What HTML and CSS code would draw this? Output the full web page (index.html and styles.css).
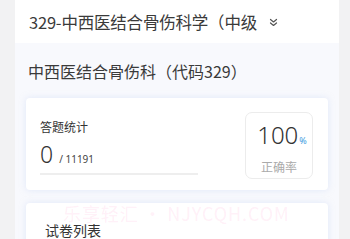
FILE: index.html
```html
<!DOCTYPE html>
<html lang="zh">
<head>
<meta charset="utf-8">
<link rel="stylesheet" href="styles.css">
</head>
<body>
<div class="page">
  <div class="panel">
    <div class="header">
      <span class="header-title">329-中西医结合骨伤科学（中级</span>
      <svg class="chev" width="9" height="9" viewBox="0 0 9 9"><path d="M1.5 1.5 L4.5 4 L7.5 1.5 M1.5 5 L4.5 7.5 L7.5 5" fill="none" stroke="#555" stroke-width="1.2" stroke-linecap="round" stroke-linejoin="round"/></svg>
    </div>
    <div class="body">
      <div class="subject">中西医结合骨伤科（代码329）</div>
      <div class="card stats">
        <div class="stats-left">
          <div class="label">答题统计</div>
          <div class="count"><span class="num">0</span><span class="total">/ 11191</span></div>
          <div class="bar"></div>
        </div>
        <div class="rate">
          <div class="rate-num">100<span class="pct">%</span></div>
          <div class="rate-label">正确率</div>
        </div>
      </div>
      <div class="card list">
        <div class="watermark">乐享轻汇 • NJYCQH.COM</div>
        <div class="list-title">试卷列表</div>
      </div>
    </div>
  </div>
</div>
</body>
</html>
```
FILE: styles.css
```css
html, body {
  margin: 0;
  padding: 0;
  background: #f2f2f3;
  font-family: "Noto Sans CJK SC", "Noto Sans", sans-serif;
  overflow: hidden;
}
.page {
  width: 350px;
  height: 239px;
  padding-left: 15px;
  box-sizing: border-box;
}
.panel {
  width: 324px;
  height: 239px;
  background: #f8f9fd;
  overflow: hidden;
}
.header {
  height: 43px;
  background: #fff;
  display: flex;
  align-items: center;
  padding-left: 14px;
  box-sizing: border-box;
}
.header-title {
  font-size: 16.5px;
  color: #3a3a3a;
  line-height: 20px;
  letter-spacing: -0.2px;
}
.chev {
  margin-left: 12px;
  margin-top: 1px;
}
.body {
  padding: 0 11px 0 11px;
}
.subject {
  font-size: 16px;
  color: #3a3a3a;
  line-height: 20px;
  padding: 18px 0 0 2px;
  height: 37px;
  box-sizing: border-box;
}
.card {
  background: #fff;
  border-radius: 4px;
  box-shadow: 0 0 6px rgba(200, 215, 245, 0.5);
}
.stats {
  margin-top: 18px;
  height: 92px;
  display: flex;
  justify-content: space-between;
  padding: 14px 15px 0 14px;
  box-sizing: border-box;
}
.stats-left {
  width: 158px;
  padding-top: 7px;
}
.label {
  font-size: 12px;
  color: #333;
  line-height: 16px;
}
.count {
  display: flex;
  align-items: baseline;
  margin-top: 7px;
  height: 24px;
}
.num {
  font-family: "Noto Sans", sans-serif;
  font-size: 23px;
  color: #333;
  line-height: 24px;
  font-weight: 300;
}
.total {
  font-family: "Noto Sans", sans-serif;
  font-size: 10px;
  color: #444;
  margin-left: 6px;
}
.bar {
  margin-top: 7px;
  height: 2px;
  background: #eeeeee;
}
.rate {
  width: 68px;
  height: 67px;
  border: 1px solid #ececec;
  border-radius: 7px;
  box-sizing: border-box;
  display: flex;
  flex-direction: column;
  align-items: center;
  padding-top: 9px;
}
.rate-num {
  font-family: "Noto Sans", sans-serif;
  font-size: 24px;
  color: #333;
  line-height: 26px;
  font-weight: 300;
  padding-left: 6px;
}
.pct {
  font-size: 9px;
  color: #3d9be0;
  font-weight: 400;
  margin-left: 1px;
}
.rate-label {
  font-size: 12px;
  color: #aaa;
  line-height: 16px;
  margin-top: 5px;
}
.list {
  margin-top: 13px;
  height: 60px;
  position: relative;
  padding: 18px 0 0 19px;
  box-sizing: border-box;
}
.watermark {
  position: absolute;
  left: 37px;
  top: 0px;
  font-size: 18px;
  line-height: 20px;
  letter-spacing: 0.9px;
  color: rgba(255, 150, 200, 0.15);
  white-space: nowrap;
}
.list-title {
  font-size: 14px;
  color: #333;
  line-height: 18px;
}
```
